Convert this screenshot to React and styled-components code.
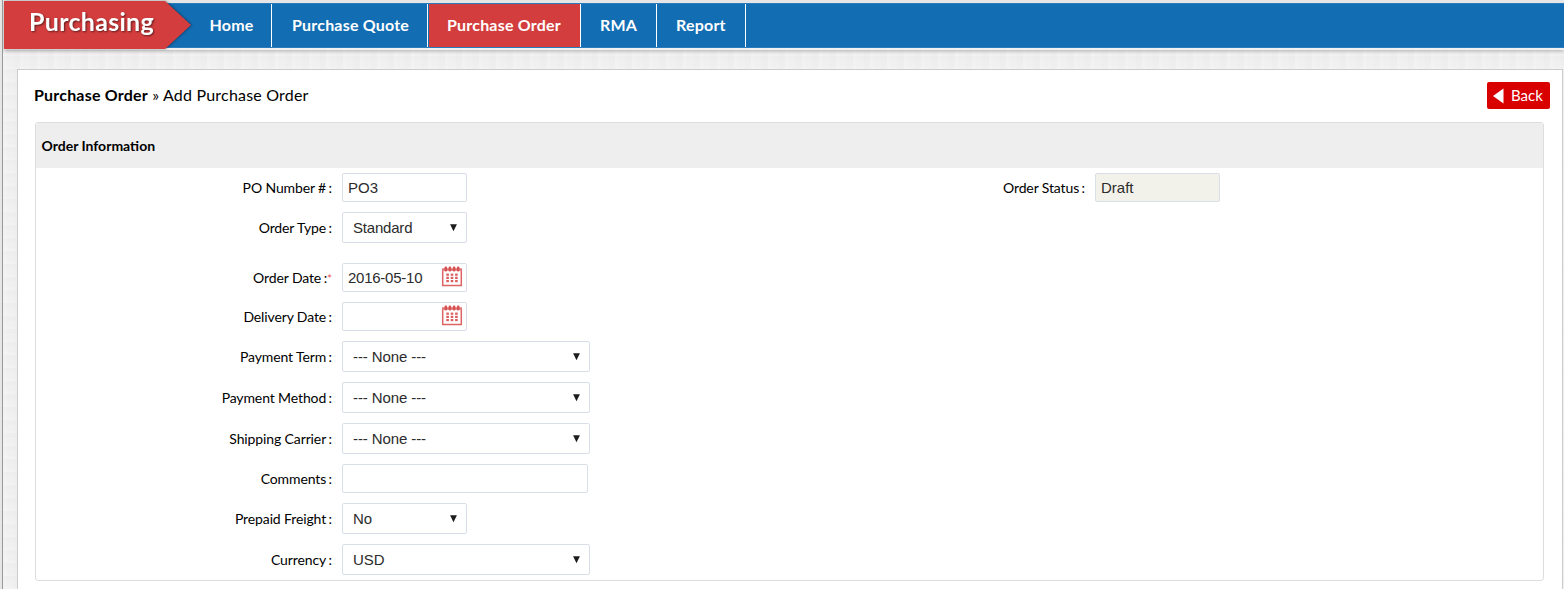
import React from 'react';
import styled, { createGlobalStyle } from 'styled-components';

const Global = createGlobalStyle`
  * { box-sizing: border-box; }
  body { margin: 0; background: #e6e6e6; font-family: Lato, sans-serif; color: #000; }
`;

const Frame = styled.div`
  height: 589px;
  overflow: hidden;
  margin-left: 2px;
  border-left: 1px solid #999;
  padding-left: 1px;
  background-color: #f0f0f0;
  background-image:
    repeating-linear-gradient(0deg, rgba(255, 255, 255, 0.14) 0 2px, transparent 3px 8px, rgba(0, 0, 0, 0.006) 9px 13px),
    repeating-linear-gradient(90deg, rgba(255, 255, 255, 0.14) 0 3px, transparent 4px 9px, rgba(0, 0, 0, 0.008) 11px 17px);
`;

const NavBar = styled.header`
  height: 50px;
  padding: 3px 0 2px;
  background: #e6e6e6;
  border-bottom: 2px solid #f1f1f1;
  box-shadow: 0 1px 4px rgba(0, 0, 0, 0.28);
`;

const NavInner = styled.nav`
  display: flex;
  height: 45px;
  background: #136db2;
  border-top: 1px solid #2a7cbc;
  border-bottom: 1px solid #2a7cbc;
`;

const Brand = styled.div`
  flex: none;
  width: 187px;
  height: 48px;
  margin: -3px 0 0;
  filter: drop-shadow(1px 0 1px rgba(0, 0, 0, 0.4));
`;

const BrandShape = styled.div`
  height: 48px;
  padding-left: 25px;
  background: #d33d3e;
  clip-path: polygon(0 0, 161px 0, 100% 24px, 161px 100%, 0 100%);
  color: #fff;
  font-size: 25px;
  font-weight: 700;
  letter-spacing: 0.3px;
  line-height: 40px;
  text-shadow: 1px 1px 2px rgba(0, 0, 0, 0.55);
`;

const NavItem = styled.a`
  flex: none;
  width: ${(p) => p.$width}px;
  height: 43px;
  border-right: 1px solid #fff;
  padding-left: ${(p) => p.$inset}px;
  margin-left: ${(p) => (p.$active ? 1 : 0)}px;
  background: ${(p) => (p.$active ? '#d33d3e' : 'transparent')};
  color: #fff;
  font-size: 16px;
  font-weight: 700;
  letter-spacing: 0.2px;
  line-height: 41px;
  white-space: nowrap;
`;

const Card = styled.main`
  margin: 19px 1px 0 13px;
  height: 540px;
  border: 1px solid #ccc;
  background: #fff;
  padding: 12px 12px 0 16px;
`;

const TitleRow = styled.div`
  display: flex;
  justify-content: space-between;
  height: 40px;
`;

const Title = styled.h1`
  margin: 0;
  font-size: 16px;
  font-weight: 400;
  letter-spacing: 0.2px;
  line-height: 25px;
`;

const BackButton = styled.button`
  display: flex;
  align-items: center;
  gap: 7px;
  width: 63px;
  height: 27px;
  padding: 0 0 0 6px;
  border: 0;
  border-radius: 2px;
  background: #d90000;
  color: #fff;
  font: 400 15px/27px Lato, sans-serif;
`;

const Panel = styled.section`
  width: 1509px;
  height: 459px;
  margin-left: 1px;
  border: 1px solid #ddd;
  border-radius: 3px;
`;

const PanelHead = styled.h2`
  margin: 0;
  height: 45px;
  padding-left: 5.5px;
  background: #eee;
  font-size: 14px;
  font-weight: 700;
  line-height: 45px;
`;

const Columns = styled.div`
  display: grid;
  grid-template-columns: 753px 1fr;
  padding-top: 5px;
`;

const Fields = styled.div`
  display: flex;
  flex-direction: column;
  gap: 10px;
`;

const Row = styled.div`
  display: flex;
  align-items: center;
  gap: 10px;
  margin-top: ${(p) => (p.$spaced ? 10 : 0)}px;
`;

const Label = styled.label`
  width: 296px;
  text-align: right;
  font-size: 14px;
  letter-spacing: -0.12px;
  line-height: 20px;
  padding-top: 1px;
  white-space: pre;
`;

const Colon = styled.span`
  margin-left: 2.5px;
`;

const Required = styled.span`
  color: #e85a5a;
  font-size: 12px;
  line-height: 1;
`;

const Box = styled.div`
  display: flex;
  align-items: center;
  justify-content: space-between;
  width: ${(p) => p.$width || 125}px;
  height: ${(p) => (p.$select ? 31 : 29)}px;
  padding: ${(p) => (p.$select ? '0 8px 0 10px' : '0 3px 0 5px')};
  border: 1px solid #d9dfe9;
  border-radius: 2px;
  background: ${(p) => (p.$muted ? '#f2f1ea' : '#fff')};
  color: #2c2c2c;
  font-family: 'Liberation Sans', Arial, sans-serif;
  font-size: 15px;
  letter-spacing: ${(p) => p.$tracking || 0}px;
`;

const ArrowLeft = () => (
  <svg width="11" height="16" viewBox="0 0 11 16">
    <path d="M0 8 10.5 .5v15z" fill="#fff" />
  </svg>
);

const Caret = () => (
  <svg width="9" height="8" viewBox="0 0 9 8">
    <path d="M1.1 .3h6.8L4.5 7.3z" fill="#1c1c1c" />
  </svg>
);

const CalendarIcon = styled.svg`
  flex: none;
  margin-bottom: 3px;
`;

const Calendar = () => (
  <CalendarIcon width="22" height="21" viewBox="0 0 22 21">
    <path d="M1.7 3v16.4h18.6V3" fill="none" stroke="#de6464" strokeWidth="1.5" />
    <path d="M1 3.5h20" stroke="#e07a7a" strokeWidth="2.4" />
    {[4.8, 8.9, 13.1, 17.2].map((x) => (
      <rect key={x} x={x - 1.3} y="0.6" width="2.6" height="4.8" rx="1.2" fill="#d95050" />
    ))}
    {[7.6, 10.8, 14].map((y) =>
      [6.6, 11, 15.4].map((x) => (
        <rect key={`${x}-${y}`} x={x - 1.3} y={y} width="2.6" height="2.2" fill="#dc5f5f" />
      ))
    )}
  </CalendarIcon>
);

const nav = [
  { label: 'Home', width: 81, inset: 18.5 },
  { label: 'Purchase Quote', width: 156, inset: 20 },
  { label: 'Purchase Order', width: 152, inset: 18, active: true },
  { label: 'RMA', width: 76, inset: 19 },
  { label: 'Report', width: 89, inset: 19 },
];

const fields = [
  { label: 'PO Number #', value: 'PO3' },
  { label: 'Order Type', value: 'Standard', select: true, tracking: -0.2 },
  { label: 'Order Date', value: '2016-05-10', date: true, required: true, spaced: true, tracking: -0.25 },
  { label: 'Delivery Date', value: '', date: true },
  { label: 'Payment Term', value: '--- None ---', select: true, width: 248, tracking: -0.1 },
  { label: 'Payment Method', value: '--- None ---', select: true, width: 248, tracking: -0.1 },
  { label: 'Shipping Carrier', value: '--- None ---', select: true, width: 248, tracking: -0.1 },
  { label: 'Comments', value: '', width: 246 },
  { label: 'Prepaid Freight', value: 'No', select: true },
  { label: 'Currency', value: 'USD', select: true, width: 248 },
];

const Field = ({ label, value, select, date, required, spaced, width, muted, tracking }) => (
  <Row $spaced={spaced}>
    <Label>
      {label}
      <Colon>:</Colon>
      {required && <Required>*</Required>}
    </Label>
    <Box $select={select} $width={width} $muted={muted} $tracking={tracking}>
      <span>{value}</span>
      {select && <Caret />}
      {date && <Calendar />}
    </Box>
  </Row>
);

export default function App() {
  return (
    <>
      <Global />
      <Frame>
        <NavBar>
          <NavInner>
            <Brand>
              <BrandShape>Purchasing</BrandShape>
            </Brand>
            {nav.map((n) => (
              <NavItem key={n.label} $width={n.width} $inset={n.inset} $active={n.active}>
                {n.label}
              </NavItem>
            ))}
          </NavInner>
        </NavBar>
        <Card>
          <TitleRow>
            <Title>
              <b>Purchase Order</b> » Add Purchase Order
            </Title>
            <BackButton>
              <ArrowLeft />
              Back
            </BackButton>
          </TitleRow>
          <Panel>
            <PanelHead>Order Information</PanelHead>
            <Columns>
              <Fields>
                {fields.map((f) => (
                  <Field key={f.label} {...f} />
                ))}
              </Fields>
              <Fields>
                <Field label="Order Status" value="Draft" muted />
              </Fields>
            </Columns>
          </Panel>
        </Card>
      </Frame>
    </>
  );
}
